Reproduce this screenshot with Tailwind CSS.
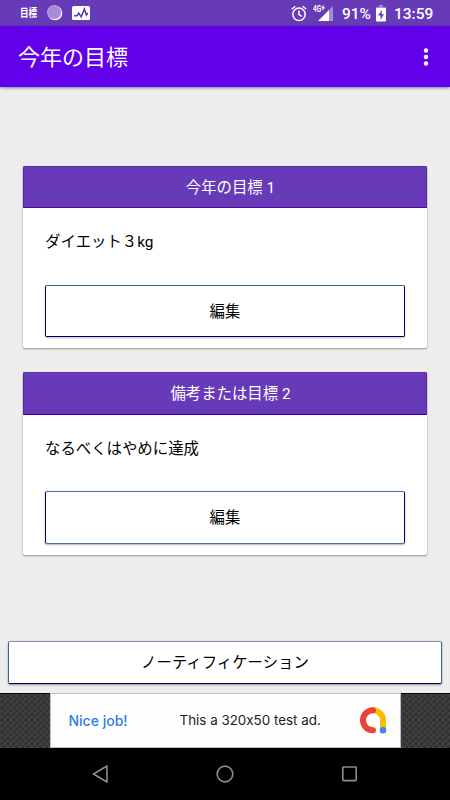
<!DOCTYPE html>
<html lang="ja">
<head>
    <meta charset="UTF-8">
    <meta name="viewport" content="width=device-width, initial-scale=1.0">
    <title>今年の目標</title>
    <script src="https://cdn.jsdelivr.net/npm/@tailwindcss/browser@4"></script>
</head>
<body class="bg-[#ededed] font-[Roboto,'Noto_Sans_CJK_JP',sans-serif] text-black">
    <div class="flex flex-col w-[450px] h-[800px] overflow-hidden">
        <!-- status bar -->
        <div class="flex items-center h-[26px] shrink-0 bg-[#673ab7] text-white pl-5 pr-[17px]">
            <span class="w-[18px] text-[11px] leading-none font-bold whitespace-nowrap"><span class="inline-block origin-left scale-x-[0.78]">目標</span></span>
            <svg class="ml-[9px]" width="16" height="16" viewBox="0 0 16 16">
                <circle cx="8" cy="8" r="7.3" fill="#fff"/>
                <circle cx="7.2" cy="7.2" r="7" fill="#a88bd6"/>
                <circle cx="7.2" cy="7.2" r="6.6" fill="none" stroke="#d1c4e9" stroke-width="1" stroke-dasharray="1 1"/>
            </svg>
            <svg class="ml-[9px]" width="18" height="14" viewBox="0 0 18 14">
                <rect width="18" height="14" rx="1.5" fill="#fff"/>
                <path d="M2 9.8h3l1.8-2.6 2.4 3.6L12.4 3l2 6 1.4-2" fill="none" stroke="#5e35b1" stroke-width="1.5"/>
            </svg>
            <svg class="ml-auto" width="16" height="17" viewBox="0 0 16 17" fill="none" stroke="#fff" stroke-width="1.5">
                <circle cx="8" cy="9.3" r="6.2"/>
                <path d="M8 5.5v4.2l2.8 1.7M.8 4.2l3.4-3M15.2 4.2l-3.4-3"/>
            </svg>
            <div class="flex ml-[6px] h-4 w-[20px]">
                <span class="w-[5px] text-[9px] leading-[8px] font-bold whitespace-nowrap"><span class="inline-block origin-left scale-x-[0.72]">4G<sup class="text-[9px] leading-none -top-[1px]">+</sup></span></span>
                <svg class="shrink-0" width="15" height="16" viewBox="0 0 15 16">
                    <path d="M15 1v15H11V5z" fill="#a68bd6"/>
                    <path d="M11 5v11H0z" fill="#fff"/>
                </svg>
            </div>
            <span class="ml-[9px] w-[29px] pt-[3px] text-[15.5px] leading-none font-medium whitespace-nowrap">91%</span>
            <svg class="ml-[5px]" width="10" height="17" viewBox="0 0 10 17">
                <path d="M3 0h4v2h3v3H0V2h3z" fill="#a68bd6"/>
                <rect y="3" width="10" height="13.5" rx="1" fill="#fff"/>
                <path d="M5.8 5L2 10.5h2.5V15L8 9.2H5.8z" fill="#673ab7"/>
            </svg>
            <span class="ml-[8px] w-[39px] pt-[3px] text-[15.5px] leading-none font-medium whitespace-nowrap">13:59</span>
        </div>

        <!-- app bar -->
        <header class="relative flex items-center justify-between h-[61px] shrink-0 bg-[#6200ea] text-white pl-[18px] pr-[21px] shadow-[0_1px_3px_rgba(0,0,0,0.45)]">
            <h1 class="pt-[2px] text-[22px] leading-none">今年の目標</h1>
            <svg width="6" height="20" viewBox="0 0 6 20" fill="#fff">
                <circle cx="3" cy="3.5" r="2.2"/>
                <circle cx="3" cy="10" r="2.2"/>
                <circle cx="3" cy="16.5" r="2.2"/>
            </svg>
        </header>

        <main class="flex flex-col grow px-[23px] pt-[79px] text-[15.4px]">
            <section class="h-[182px] rounded-[2px] bg-white overflow-hidden shadow-[0_1px_2px_rgba(0,0,0,0.4)]">
                <h2 class="flex items-center justify-center h-[42px] bg-[#673ab7] border border-t-[#5a35a8] border-x-[#5a20b0] border-b-[#5500a8] pl-[11px] pt-[3px] text-white leading-none">今年の目標 1</h2>
                <div class="px-[22px]">
                    <p class="h-[77px] pt-[23px] leading-[22px]">ダイエット３kg</p>
                    <button class="block w-full h-[52px] bg-white border border-x-[#000066] border-b-[#000066] border-t-[#3c6098] rounded-[2px] pt-[3px] shadow-[0_1px_2px_rgba(0,0,0,0.25)]">編集</button>
                </div>
            </section>

            <section class="mt-6 h-[183px] rounded-[2px] bg-white overflow-hidden shadow-[0_1px_2px_rgba(0,0,0,0.4)]">
                <h2 class="flex items-center justify-center h-[43px] bg-[#673ab7] border border-t-[#6132b4] border-x-[#5a20b0] border-b-[#35009c] pl-[11px] pt-[3px] text-white leading-none">備考または目標 2</h2>
                <div class="px-[22px]">
                    <p class="h-[76px] pt-[23px] leading-[22px]">なるべくはやめに達成</p>
                    <button class="block w-full h-[53px] bg-white border border-x-[#000066] border-y-[#4a6ba5] rounded-[2px] pt-[2px] shadow-[0_1px_2px_rgba(0,0,0,0.3)]">編集</button>
                </div>
            </section>
        </main>

        <div class="px-2 pb-[9px] shrink-0">
            <button class="block w-full h-[43px] bg-white border border-x-[#3c6098] border-t-[#7f90b5] border-b-[#000066] rounded-[2px] pt-[2px] text-[15.4px] shadow-[0_1px_2px_rgba(0,0,0,0.4)]">ノーティフィケーション</button>
        </div>

        <!-- ad banner -->
        <div class="flex justify-center h-[55px] shrink-0 border-t border-black bg-[#404040] bg-[radial-gradient(circle_at_2px_2px,#303030_1.2px,transparent_2px),radial-gradient(circle_at_5px_5px,#303030_1.2px,transparent_2px)] bg-[size:6px_6px]">
            <div class="flex items-center w-[351px] -mt-px bg-[#fefefe] border border-[#b4c4c8] pl-[18px] pr-[13px] font-[Inter,sans-serif] [font-feature-settings:'calt'_0]">
                <span class="w-[111px] text-[14px] font-medium text-[#2b7de9]">Nice job!</span>
                <span class="text-[13.4px] text-[#202124]">This a 320x50 test ad.</span>
                <svg class="ml-auto" width="27" height="27" viewBox="0 0 27 27" fill="none" stroke-linecap="round" stroke-width="6">
                    <path d="M13 3.3A10 10 0 0 1 23 13.3V23" stroke="#fbbc04"/>
                    <path d="M13 3.3A10 10 0 1 0 13 23.3" stroke="#ea4335"/>
                    <circle cx="23" cy="23.3" r="3.3" fill="#4285f4"/>
                </svg>
            </div>
        </div>

        <!-- navigation bar -->
        <nav class="flex items-center justify-between h-[52px] shrink-0 bg-black px-[92px]">
            <svg width="17" height="18" viewBox="0 0 17 18" fill="none" stroke="#8c8c8c" stroke-width="1.6" stroke-linejoin="round">
                <path d="M15 1v16L1.5 9z"/>
            </svg>
            <svg width="18" height="18" viewBox="0 0 18 18" fill="none" stroke="#8c8c8c" stroke-width="1.7">
                <circle cx="9" cy="9" r="7.8"/>
            </svg>
            <svg width="17" height="18" viewBox="0 0 17 18" fill="none" stroke="#8c8c8c" stroke-width="1.6">
                <rect x="1.8" y="2" width="13.4" height="13.6" rx="0.6"/>
            </svg>
        </nav>
    </div>
</body>
</html>
